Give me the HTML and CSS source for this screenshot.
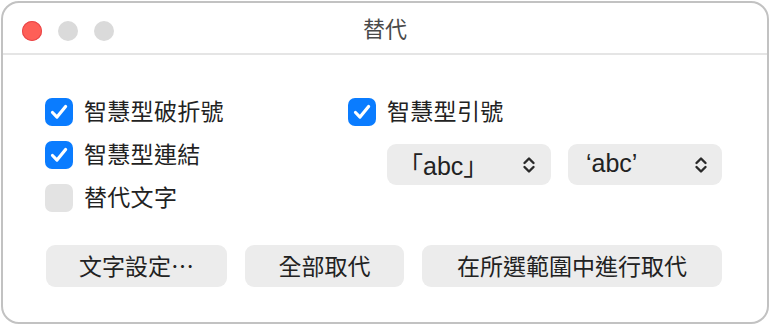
FILE: index.html
```html
<!DOCTYPE html>
<html lang="zh-Hant">
<head>
<meta charset="utf-8">
<link rel="stylesheet" href="styles.css">
</head>
<body>
<div class="window">
  <div class="titlebar">
    <div class="lights">
      <span class="light red"></span>
      <span class="light gray"></span>
      <span class="light gray"></span>
    </div>
    <div class="title">替代</div>
  </div>
  <div class="content">
    <div class="options">
      <div class="col left">
        <label class="check"><span class="box on"><svg viewBox="0 0 28 28"><path d="M7.5 14.5l4.5 4.6 8.6-10.6"/></svg></span><span class="lbl">智慧型破折號</span></label>
        <label class="check"><span class="box on"><svg viewBox="0 0 28 28"><path d="M7.5 14.5l4.5 4.6 8.6-10.6"/></svg></span><span class="lbl">智慧型連結</span></label>
        <label class="check"><span class="box"></span><span class="lbl">替代文字</span></label>
      </div>
      <div class="col right">
        <label class="check"><span class="box on"><svg viewBox="0 0 28 28"><path d="M7.5 14.5l4.5 4.6 8.6-10.6"/></svg></span><span class="lbl">智慧型引號</span></label>
        <div class="popups">
          <div class="popup p1"><span>「abc」</span><svg class="chev" viewBox="0 0 14 18"><path d="M2.5 7l4.5-4.5 4.5 4.5M2.5 11l4.5 4.5 4.5-4.5"/></svg></div>
          <div class="popup p2"><span>‘abc’</span><svg class="chev" viewBox="0 0 14 18"><path d="M2.5 7l4.5-4.5 4.5 4.5M2.5 11l4.5 4.5 4.5-4.5"/></svg></div>
        </div>
      </div>
    </div>
    <div class="buttons">
      <div class="btn b1">文字設定⋯</div>
      <div class="btn b2">全部取代</div>
      <div class="btn b3">在所選範圍中進行取代</div>
    </div>
  </div>
</div>
</body>
</html>
```
FILE: styles.css
```css
html, body {
  margin: 0;
  padding: 0;
  background: #ffffff;
}
body {
  font-family: "Noto Sans CJK TC", "Noto Sans", sans-serif;
  color: #222222;
}
.window {
  box-sizing: border-box;
  margin: 1px 0 0 1px;
  width: 768px;
  height: 323px;
  border: 2px solid #c2c2c2;
  border-radius: 18px;
  overflow: hidden;
  background: #fff;
}
.titlebar {
  position: relative;
  height: 50px;
  border-bottom: 2px solid #e5e5e5;
  display: flex;
  align-items: center;
  justify-content: center;
}
.lights {
  position: absolute;
  left: 19px;
  top: 18px;
  display: flex;
  gap: 16px;
}
.light {
  width: 20px;
  height: 20px;
  border-radius: 50%;
  background: #dadada;
}
.light.red {
  background: #fe5f57;
  box-shadow: inset 0 0 0 1px #e9474a;
}
.title {
  font-size: 22px;
  color: #4a4a4a;
  line-height: 1;
  margin-top: -2px;
}
.content {
  padding: 35px 0 0 42px;
}
.options {
  display: flex;
}
.col {
  display: flex;
  flex-direction: column;
}
.col.left {
  width: 303px;
}
.check {
  height: 43px;
  display: flex;
  align-items: center;
  font-size: 23px;
  letter-spacing: 0.3px;
  line-height: 1;
}
.lbl {
  padding-bottom: 3px;
}
.box {
  box-sizing: border-box;
  width: 28px;
  height: 28px;
  border-radius: 7px;
  background: #e3e3e3;
  margin-right: 11px;
  display: flex;
  flex-shrink: 0;
}
.box.on {
  background: #0a7cff;
}
.box svg {
  width: 28px;
  height: 28px;
}
.box svg path {
  fill: none;
  stroke: #fff;
  stroke-width: 3.2;
  stroke-linecap: round;
  stroke-linejoin: round;
}
.popups {
  display: flex;
  gap: 17px;
  margin: 11px 0 0 39px;
}
.popup {
  box-sizing: border-box;
  height: 41px;
  border-radius: 9px;
  background: #ececec;
  display: flex;
  align-items: center;
  justify-content: space-between;
  font-family: "Liberation Sans", "Noto Sans CJK TC", sans-serif;
  font-size: 25px;
  color: #222222;
}
.popup span {
  padding-bottom: 2px;
}
.p1 {
  width: 164px;
  padding: 0 15px 0 11px;
}
.p2 {
  width: 154px;
  padding: 0 14px 0 18px;
}
.chev {
  width: 14px;
  height: 18px;
}
.chev path {
  fill: none;
  stroke: #2a2a2a;
  stroke-width: 2.4;
  stroke-linecap: round;
  stroke-linejoin: round;
}
.buttons {
  display: flex;
  gap: 18px;
  margin-top: 26px;
  padding-left: 1px;
}
.btn {
  box-sizing: border-box;
  height: 42px;
  border-radius: 9px;
  background: #ececec;
  display: flex;
  align-items: center;
  justify-content: center;
  font-size: 23px;
  line-height: 1;
  color: #222222;
  padding-bottom: 2px;
}
.b1 { width: 181px; }
.b2 { width: 159px; }
.b3 { width: 300px; }
```
